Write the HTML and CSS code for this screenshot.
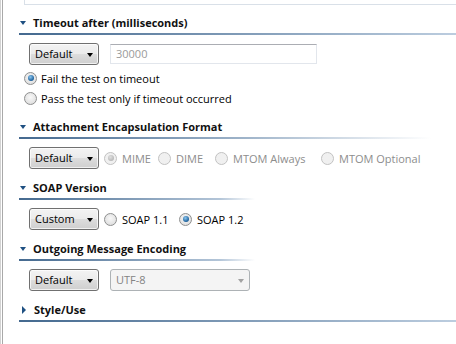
FILE: index.html
```html
<!DOCTYPE html>
<html lang="en">
<head>
    <meta charset="UTF-8">
    <title>Request Properties</title>
    <link rel="stylesheet" href="styles.css">
</head>
<body>
    <div class="view">
        <div class="panel">
            <div class="top-box"></div>

            <div class="section first">
                <div class="section-head"><span class="twisty open"></span><span class="title">Timeout after (milliseconds)</span></div>
                <div class="rule rule-full"></div>
                <div class="section-body">
                    <div class="row">
                        <div class="combo">Default<span class="arrow"></span></div>
                        <div class="textbox">30000</div>
                    </div>
                    <div class="radio-line first"><span class="radio checked"></span>Fail the test on timeout</div>
                    <div class="radio-line"><span class="radio"></span>Pass the test only if timeout occurred</div>
                </div>
            </div>

            <div class="section">
                <div class="section-head"><span class="twisty open"></span><span class="title">Attachment Encapsulation Format</span></div>
                <div class="rule rule-wide"></div>
                <div class="section-body">
                    <div class="row">
                        <div class="combo">Default<span class="arrow"></span></div>
                        <span class="option disabled opt-mime"><span class="radio checked"></span>MIME</span>
                        <span class="option disabled opt-dime"><span class="radio"></span>DIME</span>
                        <span class="option disabled opt-always"><span class="radio"></span>MTOM Always</span>
                        <span class="option disabled"><span class="radio"></span>MTOM Optional</span>
                    </div>
                </div>
            </div>

            <div class="section">
                <div class="section-head"><span class="twisty open"></span><span class="title">SOAP Version</span></div>
                <div class="rule rule-short"></div>
                <div class="section-body">
                    <div class="row">
                        <div class="combo">Custom<span class="arrow"></span></div>
                        <span class="option opt-soap"><span class="radio"></span>SOAP 1.1</span>
                        <span class="option"><span class="radio checked"></span>SOAP 1.2</span>
                    </div>
                </div>
            </div>

            <div class="section">
                <div class="section-head"><span class="twisty open"></span><span class="title">Outgoing Message Encoding</span></div>
                <div class="rule rule-short"></div>
                <div class="section-body">
                    <div class="row">
                        <div class="combo">Default<span class="arrow"></span></div>
                        <div class="combo disabled wide">UTF-8<span class="arrow"></span></div>
                    </div>
                </div>
            </div>

            <div class="section">
                <div class="section-head"><span class="twisty closed"></span><span class="title">Style/Use</span></div>
                <div class="rule rule-full"></div>
            </div>
        </div>
    </div>
</body>
</html>
```

FILE: styles.css
```css
* {
    box-sizing: border-box;
}

body {
    margin: 0;
    background: #fff;
    font-family: "Open Sans", "Noto Sans", sans-serif;
    font-size: 11px;
    color: #000;
}

.view {
    height: 100vh;
    border-left: 1px solid #d2d2d2;
    padding-left: 1px;
}

.panel {
    height: 100%;
    border-left: 1px solid #a9a9a9;
    overflow: hidden;
}

.top-box {
    height: 5px;
    margin-left: 21px;
    border-left: 1px solid #d9e0e8;
    border-bottom: 1px solid #d9e0e8;
}

.section {
    margin-left: 16px;
    margin-top: 10px;
}

.section.first {
    margin-top: 9px;
}

.section-head {
    display: flex;
    align-items: center;
    height: 17px;
}

.twisty {
    width: 0;
    height: 0;
    margin-right: 7px;
}

.twisty.open {
    margin-left: 1px;
    border-left: 3.5px solid transparent;
    border-right: 3.5px solid transparent;
    border-top: 4px solid #1f5082;
}

.twisty.closed {
    margin-left: 3px;
    margin-right: 8px;
    border-top: 4px solid transparent;
    border-bottom: 4px solid transparent;
    border-left: 4px solid #1f5082;
}

.title {
    font-weight: bold;
    color: #111;
}

.rule {
    height: 2px;
    margin-top: 2px;
}

.rule-full {
    background: linear-gradient(to right, #44698f, #bccddf);
}

.rule-wide {
    width: 412px;
    background: linear-gradient(to right, #44698f, #9fb4ca 55%, rgba(255, 255, 255, 0));
}

.rule-short {
    width: 236px;
    background: linear-gradient(to right, #44698f, #b3c5d8 85%, rgba(255, 255, 255, 0));
}

.section-body {
    padding-left: 10px;
    padding-top: 8px;
}

.row {
    display: flex;
    align-items: center;
    height: 22px;
}

.combo {
    position: relative;
    flex: none;
    width: 70px;
    height: 22px;
    line-height: 20px;
    padding-left: 5px;
    border: 1px solid #707070;
    border-radius: 3px;
    background: linear-gradient(#f3f3f3, #ebebeb 50%, #dddddd 50%, #cfcfcf);
    box-shadow: inset 0 0 0 1px rgba(255, 255, 255, 0.7);
    margin-right: 5px;
}

.arrow {
    position: absolute;
    right: 5px;
    top: 9px;
    width: 0;
    height: 0;
    border-left: 3.5px solid transparent;
    border-right: 3.5px solid transparent;
    border-top: 4px solid #000;
}

.combo.disabled {
    border-color: #adb2b5;
    background: #f4f4f4;
    box-shadow: none;
    color: #838383;
    margin-left: 6px;
}

.combo.disabled .arrow {
    border-top-color: #a2a2a2;
}

.combo.wide {
    width: 140px;
}

.textbox {
    width: 207px;
    height: 20px;
    line-height: 18px;
    padding-left: 5px;
    margin-left: 6px;
    border: 1px solid #e2e6ec;
    border-top-color: #abadb3;
    color: #9a9a9a;
}

.radio-line {
    display: flex;
    align-items: center;
    height: 20px;
    margin-left: -5px;
}

.radio-line.first {
    margin-top: 3px;
}

.option {
    display: flex;
    flex: none;
    align-items: center;
}

.option.disabled {
    color: #8d8d8d;
}

.opt-mime {
    width: 54px;
}

.opt-dime {
    width: 57px;
}

.opt-always {
    width: 106px;
}

.opt-soap {
    width: 75px;
}

.radio {
    position: relative;
    flex: none;
    width: 13px;
    height: 13px;
    margin-right: 5px;
    border: 1px solid #8e8f8f;
    border-radius: 50%;
    background: radial-gradient(circle at 50% 40%, #f8f8f8, #d8d8d8);
}

.radio-line .radio {
    margin-right: 4px;
}

.radio.checked::after {
    content: "";
    position: absolute;
    left: 2.5px;
    top: 2.5px;
    width: 6px;
    height: 6px;
    border-radius: 50%;
    background: radial-gradient(circle at 40% 35%, #8cc7f0, #1b5f9a 70%, #123e66);
}

.disabled .radio {
    border-color: #c2c2c2;
    background: #f0f0f0;
}

.disabled .radio.checked::after {
    background: radial-gradient(circle at 40% 35%, #e0e0e0, #a8a8a8);
}
```
